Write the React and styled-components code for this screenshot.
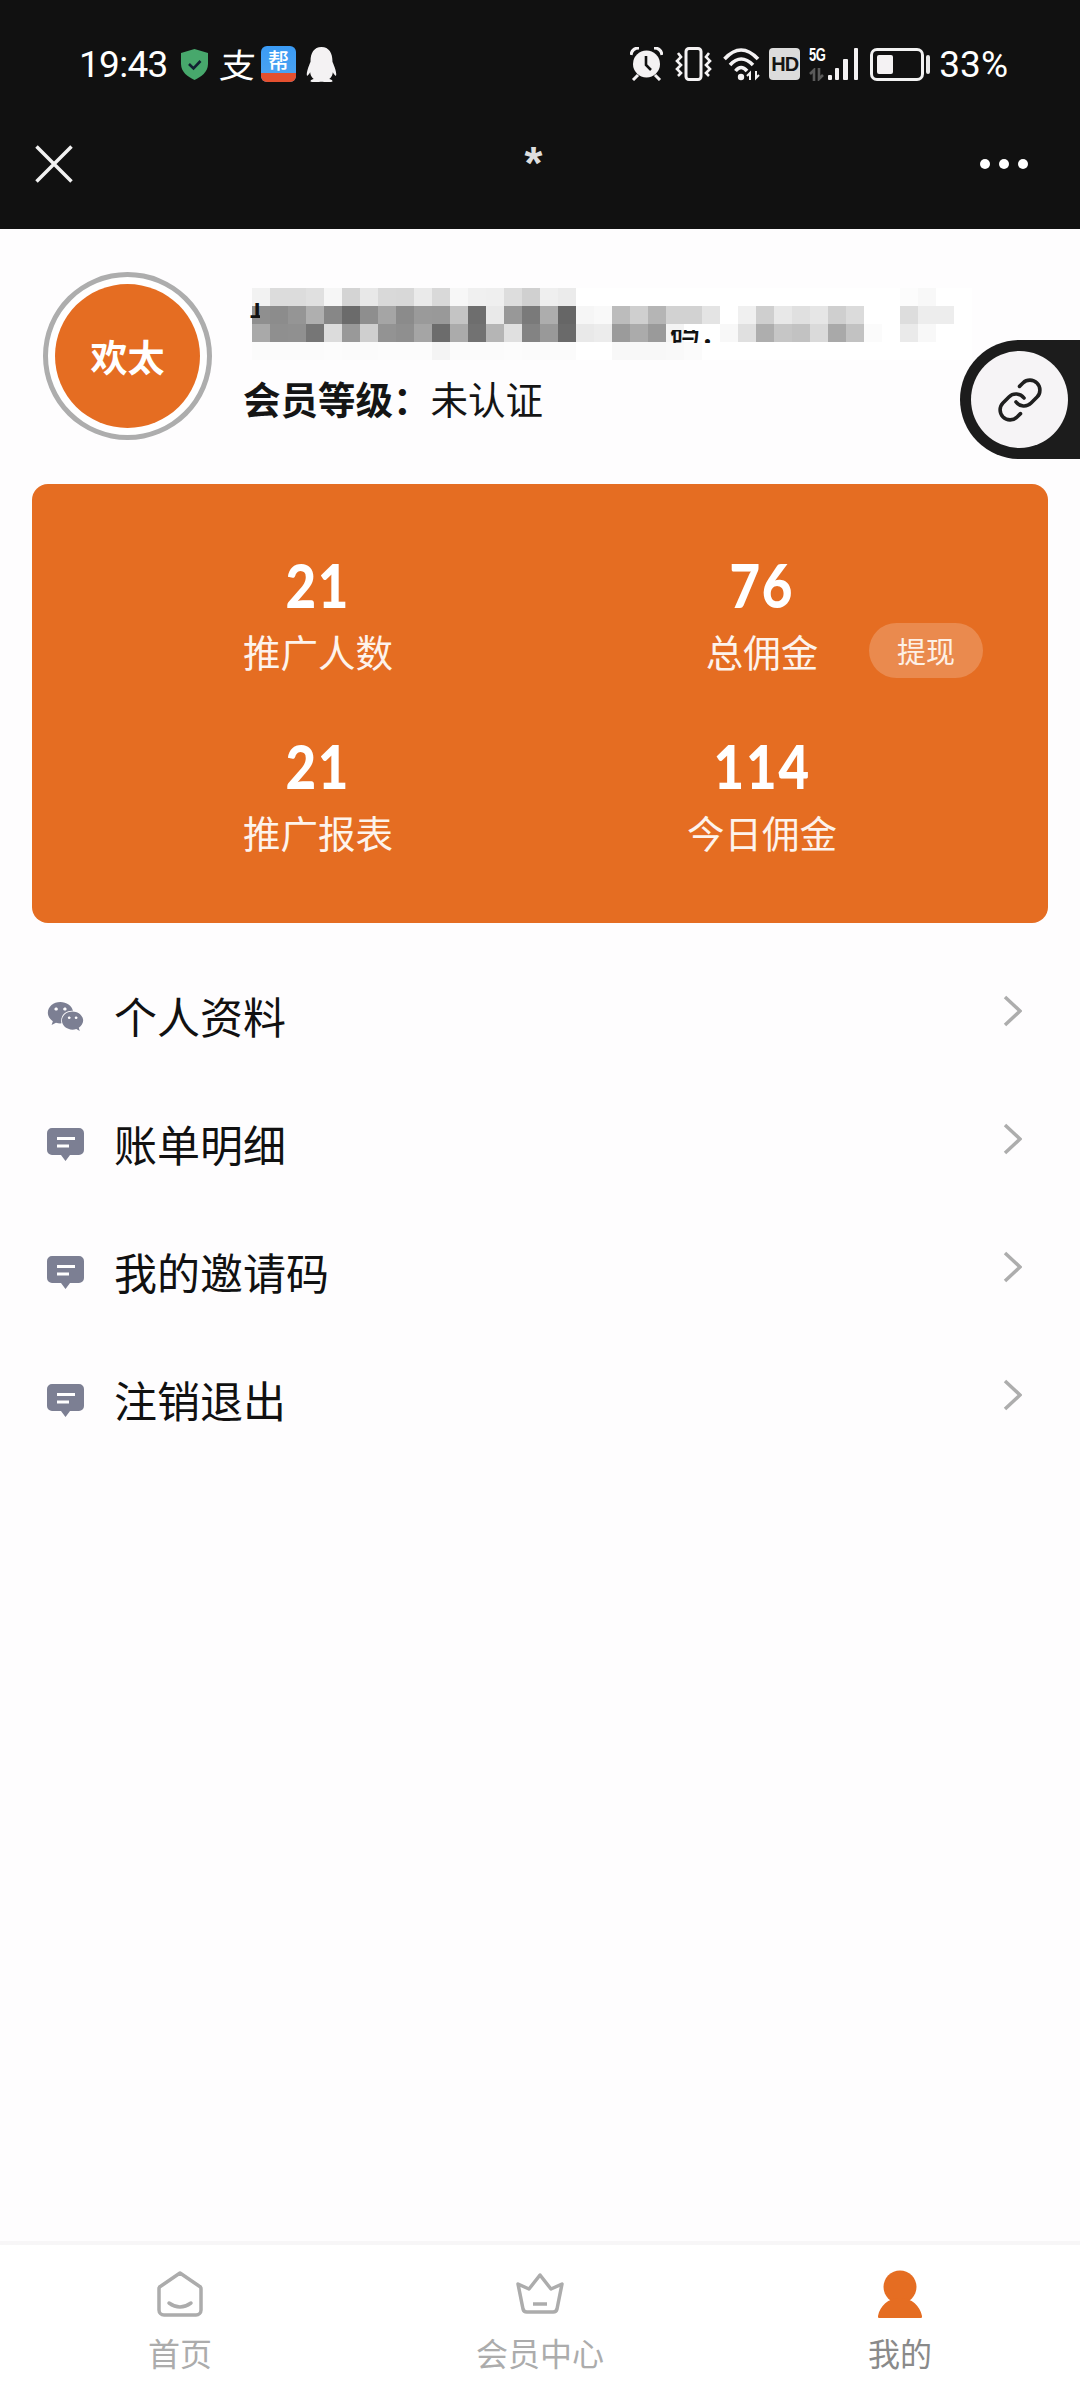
import styled, { createGlobalStyle } from 'styled-components';
import { Link } from 'lucide-react';
import { FaQq, FaWeixin } from 'react-icons/fa';

const GlobalStyle = createGlobalStyle`
    html, body {
        margin: 0;
        padding: 0;
        background: #fff;
    }
    * {
        box-sizing: border-box;
    }
    body {
        font-family: 'Noto Sans CJK SC', 'Noto Sans', sans-serif;
    }
`;

const Page = styled.div`
    position: relative;
    display: flex;
    flex-direction: column;
    width: 1080px;
    height: 2388px;
    overflow: hidden;
    background: #fefdfe;
`;

const Header = styled.header`
    padding: 36px 0 29px;
    background: #111111;
    color: #fff;
`;

const StatusBar = styled.div`
    display: flex;
    justify-content: space-between;
    align-items: center;
    height: 56px;
    padding: 0 72px 0 79px;
`;

const StatusGroup = styled.div`
    display: flex;
    align-items: center;
`;

const Clock = styled.span`
    width: 88px;
    margin-right: 14px;
    font-family: Roboto, sans-serif;
    font-size: 37px;
    letter-spacing: -0.7px;
    white-space: nowrap;
`;

const AlipayGlyph = styled.span`
    width: 34px;
    margin: 0 6px 0 13px;
    font-size: 34px;
    line-height: 40px;
    font-weight: 400;
    transform: skewX(-6deg) scaleX(1.05);
`;

const AppIcon = styled.div`
    display: flex;
    flex-direction: column;
    width: 35px;
    height: 36px;
    margin-right: 8px;
    border-radius: 6px;
    background: linear-gradient(#3a9bf5, #4fa4f0);
`;

const AppGlyph = styled.span`
    height: 27px;
    font-size: 21px;
    line-height: 27px;
    font-weight: 500;
    text-align: center;
`;

const AppStrip = styled.span`
    height: 9px;
    border-radius: 0 0 6px 6px;
    background: #e4502f;
`;

const HdBadge = styled.span`
    width: 31px;
    height: 32px;
    margin-right: 9px;
    border-radius: 4px;
    background: #dcdcdc;
    color: #151515;
    font-family: 'Liberation Sans', sans-serif;
    font-size: 20px;
    font-weight: 700;
    line-height: 32px;
    letter-spacing: -1px;
    text-align: center;
`;

const SignalGroup = styled.div`
    display: flex;
    align-items: flex-start;
    height: 34px;
    margin-right: 9px;
`;

const SignalColumn = styled.div`
    display: flex;
    flex-direction: column;
    justify-content: space-between;
    width: 19px;
    height: 34px;
`;

const SignalLabel = styled.span`
    width: 19px;
    font-family: 'Liberation Sans', sans-serif;
    font-size: 18px;
    font-weight: 700;
    line-height: 17px;
    letter-spacing: -0.5px;
    white-space: nowrap;
    transform: scaleX(0.72);
    transform-origin: left;
`;

const Battery = styled.div`
    display: flex;
    width: 54px;
    height: 33px;
    padding: 4px;
    border: 3px solid #f2f2f2;
    border-radius: 7px;
`;

const BatteryFill = styled.div`
    border-radius: 2px;
    background: #f4f2f3;
`;

const BatteryTip = styled.div`
    width: 4px;
    height: 19px;
    margin: 0 9px 0 2px;
    border-radius: 2px;
    background: #e8e8e8;
`;

const Percent = styled.span`
    font-family: Roboto, sans-serif;
    font-size: 37px;
    white-space: nowrap;
`;

const NavBar = styled.div`
    display: grid;
    grid-template-columns: 1fr auto 1fr;
    align-items: center;
    height: 72px;
    margin-top: 36px;
    padding: 0 52px 0 35px;
`;

const Asterisk = styled.span`
    color: #dedede;
    font-family: 'Liberation Sans', sans-serif;
    font-size: 46px;
    font-weight: 700;
    line-height: 72px;
    transform: translate(2px, -1px);
`;

const Dots = styled.div`
    display: flex;
    justify-content: flex-end;
    gap: 9px;
`;

const Dot = styled.span`
    width: 10px;
    height: 10px;
    border-radius: 50%;
    background: #fff;
`;

const Main = styled.main`
    position: relative;
    flex: 1;
`;

const Profile = styled.section`
    display: flex;
    gap: 32px;
    padding: 43px 0 0 43px;
`;

const Avatar = styled.div`
    display: flex;
    flex: none;
    justify-content: center;
    align-items: center;
    width: 169px;
    height: 168px;
    border: 5px solid #adadad;
    border-radius: 50%;
    background: #fff;
`;

const AvatarInner = styled.div`
    display: flex;
    justify-content: center;
    align-items: center;
    width: 145px;
    height: 144px;
    border-radius: 50%;
    background: #e56d22;
    color: #fff;
    font-size: 37px;
    font-weight: 700;
`;

const ProfileInfo = styled.div`
    display: flex;
    flex-direction: column;
    padding-top: 16px;
`;

const Mosaic = styled.div`
    position: relative;
    display: grid;
    grid-template-columns: repeat(40, 18px);
    grid-auto-rows: 18px;
    margin-left: 8px;
`;

const MosaicCell = styled.span`
    background: ${(props) => props.$color};
`;

// what is left of the erased account line, cut off just like in the original
const ErasedText = styled.span`
    position: absolute;
    left: ${(props) => props.$left}px;
    top: ${(props) => props.$top}px;
    width: ${(props) => props.$width}px;
    height: ${(props) => props.$height}px;
    overflow: hidden;
    color: #111;
    font-size: 30px;
    font-weight: 500;
    white-space: nowrap;
`;

const ErasedGlyph = styled.span`
    position: absolute;
    left: 0;
    bottom: -7px;
    line-height: 40px;
`;

const Level = styled.div`
    margin: 13px 0 0 -1px;
    color: #151515;
    font-size: 37.5px;
    line-height: 50px;
    white-space: nowrap;
`;

const LevelLabel = styled.strong`
    font-weight: 700;
`;

const FloatButton = styled.div`
    position: absolute;
    top: 111px;
    right: 0;
    display: flex;
    align-items: center;
    width: 120px;
    height: 119px;
    padding-left: 11px;
    border-radius: 60px 0 0 60px;
    background: #1c1c1c;
`;

const FloatCircle = styled.div`
    display: flex;
    flex: none;
    justify-content: center;
    align-items: center;
    width: 97px;
    height: 97px;
    border-radius: 50%;
    background: #f6f4f6;
    color: #1f1f1f;
`;

const StatsCard = styled.section`
    display: grid;
    grid-template-columns: 1fr 1fr;
    row-gap: 60px;
    margin: 44px 32px 0;
    padding: 71px 64px 66px;
    border-radius: 16px;
    background: #e56d22;
    color: #fff;
`;

const Stat = styled.div`
    position: relative;
    display: flex;
    flex-direction: column;
    align-items: center;
    row-gap: 11px;
`;

const StatValue = styled.span`
    font-family: Lato, sans-serif;
    font-size: 60px;
    font-weight: 900;
    line-height: 60px;
    letter-spacing: 2px;
    transform: scaleX(0.88);
`;

const StatLabel = styled.span`
    font-size: 37.5px;
    line-height: 50px;
    color: #fdf3ec;
`;

const WithdrawButton = styled.span`
    position: absolute;
    top: 68px;
    right: 1px;
    width: 114px;
    height: 55px;
    border-radius: 28px;
    background: rgba(255, 255, 255, 0.2);
    color: #fdf0e6;
    font-size: 29px;
    line-height: 55px;
    text-align: center;
`;

const Menu = styled.nav`
    margin-top: 28px;
`;

const MenuRow = styled.div`
    display: flex;
    align-items: center;
    height: 128px;
    padding: 0 58px 0 47px;
`;

const MenuIcon = styled.span`
    display: flex;
    width: 37px;
    margin: 3px 30px 0 0;
    color: #7c7f93;
`;

const MenuLabel = styled.span`
    flex: 1;
    color: #111;
    font-size: 43px;
    line-height: 60px;
`;

const Chevron = styled.span`
    display: flex;
    margin-bottom: 8px;
`;

const TabBar = styled.footer`
    display: grid;
    grid-template-columns: repeat(3, 360px);
    height: 147px;
    padding-top: 25px;
    border-top: 4px solid #f7f6f7;
    background: #fff;
`;

const TabItem = styled.div`
    display: flex;
    flex-direction: column;
    align-items: center;
    color: ${(props) => (props.$active ? '#8a8a8a' : '#acacac')};
`;

const TabIcon = styled.span`
    display: flex;
    align-items: center;
    height: 48px;
`;

const TabLabel = styled.span`
    margin-top: 14px;
    font-size: 32px;
    line-height: 40px;
`;

const ShieldIcon = () => (
    <svg width="27" height="31" viewBox="0 0 27 31">
        <path d="M13.5 0 L27 4 V15 C27 23 20 28 13.5 31 C7 28 0 23 0 15 V4 Z" fill="#47a86c" />
        <path d="M8 15 L12.5 19.5 L19.5 12" fill="none" stroke="#123" strokeWidth="2.6" />
    </svg>
);

const AlarmIcon = () => (
    <svg width="33" height="34" viewBox="0 0 33 34" style={{ marginRight: 12 }}>
        <circle cx="16.5" cy="17" r="13.5" fill="#f4f2f3" />
        <path d="M16 9 V18 L21 23" fill="none" stroke="#111" strokeWidth="2.6" />
        <path d="M1 8 Q2 1 9 1 M32 8 Q31 1 24 1" fill="none" stroke="#f4f2f3" strokeWidth="3" />
        <path d="M3 33 L8 28 M30 33 L25 28" stroke="#f4f2f3" strokeWidth="3" />
    </svg>
);

const VibrateIcon = () => (
    <svg width="37" height="34" viewBox="0 0 37 34" style={{ marginRight: 11 }}>
        <rect x="11" y="1.5" width="15" height="31" rx="3" fill="none" stroke="#f4f2f3" strokeWidth="3" />
        <path
            d="M3 6 L6 10 L2 14 L6 18 L2 22 L6 26 L3 29 M34 6 L31 10 L35 14 L31 18 L35 22 L31 26 L34 29"
            fill="none"
            stroke="#f4f2f3"
            strokeWidth="2.6"
        />
    </svg>
);

const WifiIcon = () => (
    <svg width="37" height="34" viewBox="0 0 37 34" style={{ marginRight: 9 }}>
        <path
            d="M1.5 12 Q18 -6 35 12 M7 18 Q18 6 30 18 M12.5 24 Q18 17 24 24"
            fill="none"
            stroke="#f4f2f3"
            strokeWidth="3.6"
        />
        <circle cx="18" cy="30" r="3.2" fill="#f4f2f3" />
        <path d="M27 33 V26 L24 29 M33 24 V31 L36 28" fill="none" stroke="#f4f2f3" strokeWidth="2" />
    </svg>
);

const SignalArrows = () => (
    <svg width="16" height="13" viewBox="0 0 16 13">
        <path d="M5 13 V2 L1 6 M10 0 V11 L14 7" fill="none" stroke="#5a5a5a" strokeWidth="2.6" />
    </svg>
);

const SignalBars = () => (
    <svg width="33" height="34" viewBox="0 0 33 34">
        <rect x="0" y="28" width="4" height="5" rx="1" fill="#f4f2f3" />
        <rect x="7" y="21" width="4" height="12" rx="1" fill="#f4f2f3" />
        <rect x="15" y="12" width="5" height="21" rx="1" fill="#f4f2f3" />
        <rect x="26" y="1" width="4" height="32" rx="1" fill="#f4f2f3" />
    </svg>
);

const CloseIcon = () => (
    <svg width="38" height="38" viewBox="0 0 38 38">
        <path d="M1.5 1.5 L36.5 36.5 M36.5 1.5 L1.5 36.5" stroke="#f2f2f2" strokeWidth="3.5" />
    </svg>
);

const ChatIcon = () => (
    <svg width="37" height="34" viewBox="0 0 37 34">
        <path
            d="M5 0 H32 a5 5 0 0 1 5 5 V22 a5 5 0 0 1 -5 5 H23 L18.5 33 L14 27 H5 a5 5 0 0 1 -5 -5 V5 a5 5 0 0 1 5 -5 Z"
            fill="currentColor"
        />
        <path d="M10 10.5 H28 M10 18 H22" stroke="#fff" strokeWidth="3" />
    </svg>
);

const ChevronIcon = () => (
    <svg width="19" height="32" viewBox="0 0 19 32">
        <path d="M2 2 L17 16 L2 30" fill="none" stroke="#adadad" strokeWidth="3.5" />
    </svg>
);

const HomeIcon = () => (
    <svg width="46" height="46" viewBox="0 0 46 46">
        <path
            d="M23 2 L42 15 a3 3 0 0 1 2 3 V39 a5 5 0 0 1 -5 5 H7 a5 5 0 0 1 -5 -5 V18 a3 3 0 0 1 2 -3 Z"
            fill="none"
            stroke="currentColor"
            strokeWidth="3.5"
            strokeLinejoin="round"
        />
        <path d="M12 32 Q23 40 34 32" fill="none" stroke="currentColor" strokeWidth="3.5" strokeLinecap="round" />
    </svg>
);

const CrownIcon = () => (
    <svg width="48" height="42" viewBox="0 0 48 42">
        <path
            d="M2 11 L13 16 L24 2 L35 16 L46 11 L41 36 a4 4 0 0 1 -4 3 H11 a4 4 0 0 1 -4 -3 Z"
            fill="none"
            stroke="currentColor"
            strokeWidth="3.5"
            strokeLinejoin="round"
        />
        <path d="M17 31 H31" stroke="currentColor" strokeWidth="3.5" />
    </svg>
);

const PersonIcon = () => (
    <svg width="44" height="48" viewBox="0 0 44 48">
        <circle cx="22" cy="17" r="16.5" fill="#e56d22" />
        <path d="M0 46 C2 36 10 28 22 28 C34 28 42 36 44 46 a1.5 1.5 0 0 1 -1.5 2 H1.5 a1.5 1.5 0 0 1 -1.5 -2 Z" fill="#e56d22" />
    </svg>
);

const mosaicRows = [
    'f2 dc dc e0 f6 d4 e8 d9 d8 ea d9 f7 f0 ef dd d0 ef eb ff ff ff ff ff ff ff ff ff ff ff ff ff ff ff ff ff ff fc f8 ff ff',
    '8f 8c 95 af 87 6b 8e a5 8b 9a 99 c4 6e e9 98 7a ad 66 f6 f9 bc cf b5 d2 d2 e4 ff f0 cf e8 e0 e6 cf db ff ff dd ed ed ff',
    'a9 8f 90 76 dc 99 cf 93 8f a5 6c ab 72 b5 e0 83 99 6a e9 ec 9b ab 9a f4 ff ff f8 e0 ae c6 c2 da a9 c2 fb ff ea f8 ff ff',
    'fb fb fb fb fc fb fb fc fc fc f4 fb fb fb fc fb fb fb ff ff f8 f8 f8 f9 fb ff ff ff ff ff ff ff ff ff ff ff ff ff ff ff',
].map((row) => row.split(' '));

const stats = [
    { value: '21', label: '推广人数' },
    { value: '76', label: '总佣金', withdraw: true },
    { value: '21', label: '推广报表' },
    { value: '114', label: '今日佣金' },
];

const menuItems = [
    { label: '个人资料', icon: <FaWeixin size={37} /> },
    { label: '账单明细', icon: <ChatIcon /> },
    { label: '我的邀请码', icon: <ChatIcon /> },
    { label: '注销退出', icon: <ChatIcon /> },
];

const tabs = [
    { label: '首页', icon: <HomeIcon /> },
    { label: '会员中心', icon: <CrownIcon /> },
    { label: '我的', icon: <PersonIcon />, active: true },
];

function App() {
    return (
        <Page>
            <GlobalStyle />
            <Header>
                <StatusBar>
                    <StatusGroup>
                        <Clock>19:43</Clock>
                        <ShieldIcon />
                        <AlipayGlyph>支</AlipayGlyph>
                        <AppIcon>
                            <AppGlyph>帮</AppGlyph>
                            <AppStrip />
                        </AppIcon>
                        <FaQq size={35} color="#f4f2f3" />
                    </StatusGroup>
                    <StatusGroup>
                        <AlarmIcon />
                        <VibrateIcon />
                        <WifiIcon />
                        <HdBadge>HD</HdBadge>
                        <SignalGroup>
                            <SignalColumn>
                                <SignalLabel>5G</SignalLabel>
                                <SignalArrows />
                            </SignalColumn>
                            <SignalBars />
                        </SignalGroup>
                        <Battery>
                            <BatteryFill style={{ width: '40%' }} />
                        </Battery>
                        <BatteryTip />
                        <Percent>33%</Percent>
                    </StatusGroup>
                </StatusBar>
                <NavBar>
                    <CloseIcon />
                    <Asterisk>*</Asterisk>
                    <Dots>
                        <Dot />
                        <Dot />
                        <Dot />
                    </Dots>
                </NavBar>
            </Header>

            <Main>
                <Profile>
                    <Avatar>
                        <AvatarInner>欢太</AvatarInner>
                    </Avatar>
                    <ProfileInfo>
                        <Mosaic>
                            {mosaicRows.flat().map((shade, i) => (
                                <MosaicCell key={i} $color={`#${shade}${shade}${shade}`} />
                            ))}
                            <ErasedText $left={-4} $top={15} $width={12} $height={15}>
                                <ErasedGlyph>1</ErasedGlyph>
                            </ErasedText>
                            <ErasedText $left={418} $top={42} $width={66} $height={13}>
                                <ErasedGlyph>码：</ErasedGlyph>
                            </ErasedText>
                        </Mosaic>
                        <Level>
                            <LevelLabel>会员等级：</LevelLabel>未认证
                        </Level>
                    </ProfileInfo>
                </Profile>

                <FloatButton>
                    <FloatCircle>
                        <Link size={48} strokeWidth={1.8} />
                    </FloatCircle>
                </FloatButton>

                <StatsCard>
                    {stats.map((stat) => (
                        <Stat key={stat.label}>
                            <StatValue>{stat.value}</StatValue>
                            <StatLabel>{stat.label}</StatLabel>
                            {stat.withdraw && <WithdrawButton>提现</WithdrawButton>}
                        </Stat>
                    ))}
                </StatsCard>

                <Menu>
                    {menuItems.map((item) => (
                        <MenuRow key={item.label}>
                            <MenuIcon>{item.icon}</MenuIcon>
                            <MenuLabel>{item.label}</MenuLabel>
                            <Chevron>
                                <ChevronIcon />
                            </Chevron>
                        </MenuRow>
                    ))}
                </Menu>
            </Main>

            <TabBar>
                {tabs.map((tab) => (
                    <TabItem key={tab.label} $active={tab.active}>
                        <TabIcon>{tab.icon}</TabIcon>
                        <TabLabel>{tab.label}</TabLabel>
                    </TabItem>
                ))}
            </TabBar>
        </Page>
    );
}

export default App;
